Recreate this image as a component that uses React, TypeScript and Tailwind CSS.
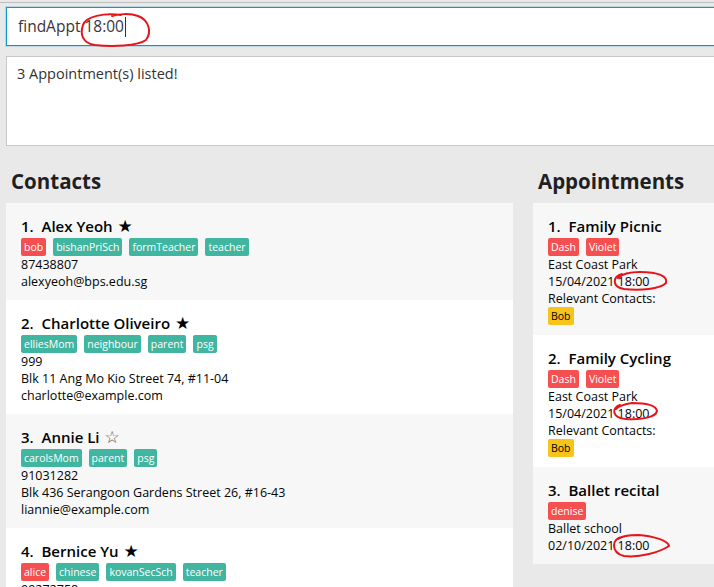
import React from "react";

type Tag = { t: string; c: "red" | "teal" | "yellow" };

const tagCls: Record<string, string> = {
  red: "bg-[#f54f52] text-white",
  teal: "bg-[#40b59f] text-white",
  yellow: "bg-[#f7c41a] text-black",
};

function Tags({ tags }: { tags: Tag[] }) {
  return (
    <div className="flex gap-[7px] h-[18px]">
      {tags.map((g, i) => (
        <span
          key={i}
          className={`h-[18px] px-[3px] rounded-[2px] text-[10.5px] leading-[18px] ${tagCls[g.c]}`}
        >
          {g.t}
        </span>
      ))}
    </div>
  );
}

function NameRow({ n, name, star }: { n: number; name: string; star?: "full" | "empty" }) {
  return (
    <div className="flex items-center h-[23px] text-[15px] font-semibold text-[#010504] whitespace-pre">
      <span>{`${n}.  `}</span>
      <span>{name}</span>
      {star === "full" && (
        <span className="ml-[5px] text-[17px] leading-none font-normal text-black" style={{ fontFamily: "'DejaVu Sans', sans-serif" }}>★</span>
      )}
      {star === "empty" && (
        <span className="ml-[5px] text-[17px] leading-none font-normal text-[#555]" style={{ fontFamily: "'DejaVu Sans', sans-serif" }}>☆</span>
      )}
    </div>
  );
}

type Contact = { name: string; star: "full" | "empty"; tags: Tag[]; lines: string[] };

const contacts: Contact[] = [
  {
    name: "Alex Yeoh",
    star: "full",
    tags: [
      { t: "bob", c: "red" },
      { t: "bishanPriSch", c: "teal" },
      { t: "formTeacher", c: "teal" },
      { t: "teacher", c: "teal" },
    ],
    lines: ["87438807", "alexyeoh@bps.edu.sg"],
  },
  {
    name: "Charlotte Oliveiro",
    star: "full",
    tags: [
      { t: "elliesMom", c: "teal" },
      { t: "neighbour", c: "teal" },
      { t: "parent", c: "teal" },
      { t: "psg", c: "teal" },
    ],
    lines: ["999", "Blk 11 Ang Mo Kio Street 74, #11-04", "charlotte@example.com"],
  },
  {
    name: "Annie Li",
    star: "empty",
    tags: [
      { t: "carolsMom", c: "teal" },
      { t: "parent", c: "teal" },
      { t: "psg", c: "teal" },
    ],
    lines: ["91031282", "Blk 436 Serangoon Gardens Street 26, #16-43", "liannie@example.com"],
  },
  {
    name: "Bernice Yu",
    star: "full",
    tags: [
      { t: "alice", c: "red" },
      { t: "chinese", c: "teal" },
      { t: "kovanSecSch", c: "teal" },
      { t: "teacher", c: "teal" },
    ],
    lines: ["99272758", "Blk 30 Lorong 3 Serangoon Gardens, #07-18", "berniceyu@example.com"],
  },
];

type Appt = { name: string; tags: Tag[]; place: string; date: string; contacts?: Tag[] };

const appts: Appt[] = [
  {
    name: "Family Picnic",
    tags: [
      { t: "Dash", c: "red" },
      { t: "Violet", c: "red" },
    ],
    place: "East Coast Park",
    date: "15/04/2021 18:00",
    contacts: [{ t: "Bob", c: "yellow" }],
  },
  {
    name: "Family Cycling",
    tags: [
      { t: "Dash", c: "red" },
      { t: "Violet", c: "red" },
    ],
    place: "East Coast Park",
    date: "15/04/2021 18:00",
    contacts: [{ t: "Bob", c: "yellow" }],
  },
  {
    name: "Ballet recital",
    tags: [{ t: "denise", c: "red" }],
    place: "Ballet school",
    date: "02/10/2021 18:00",
  },
];

function Line({ children }: { children: React.ReactNode }) {
  return <div className="h-[17px] leading-[17px] text-[12.5px] text-[#010504] whitespace-nowrap">{children}</div>;
}

export default function App() {
  return (
    <div
      className="relative w-[714px] h-[587px] overflow-hidden bg-[#e9e9e9]"
      style={{ fontFamily: "'Open Sans', 'Noto Sans', sans-serif" }}
    >
      <div className="h-[2px]" />
      <div className="h-px bg-[#bdbdbd]" />
      <div className="pl-[6px] pt-[4px]">
        <div className="h-[39px] w-[720px] bg-white border border-[#0a98d3] shadow-[0_0_0_1px_rgba(10,152,211,0.2)] flex items-center pl-[11px] text-[15.5px] text-[#3a3540]">
          <span>findAppt 18:00</span>
          <span className="w-px h-[20px] bg-[#333] ml-px" />
        </div>
        <div className="mt-[10px] h-[90px] w-[720px] bg-white border border-[#c8c8c8] pl-[10px] pt-[6px] text-[14.5px] text-[#333]">
          3 Appointment(s) listed!
        </div>
      </div>

      <div className="flex">
        <div className="w-[513px] pl-[6px] shrink-0">
          <div className="h-[57px] pl-[5px] pt-[21px] text-[20.5px] leading-[28px] font-bold text-[#1f1f24]">Contacts</div>
          <div>
            {contacts.map((c, i) => (
              <div
                key={i}
                className={`pl-[15px] pt-[12px] pb-[10px] ${i % 2 === 0 ? "bg-[#f7f7f7]" : "bg-white"}`}
              >
                <NameRow n={i + 1} name={c.name} star={c.star} />
                <Tags tags={c.tags} />
                {c.lines.map((l, j) => (
                  <Line key={j}>{l}</Line>
                ))}
              </div>
            ))}
          </div>
        </div>
        <div className="ml-[20px] w-[240px] shrink-0">
          <div className="h-[57px] pl-[5px] pt-[21px] text-[20.5px] leading-[28px] font-bold text-[#1f1f24]">Appointments</div>
          <div>
            {appts.map((a, i) => (
              <div
                key={i}
                className={`pl-[15px] pt-[12px] pb-[10px] ${i % 2 === 0 ? "bg-[#f7f7f7]" : "bg-white"}`}
              >
                <NameRow n={i + 1} name={a.name} />
                <Tags tags={a.tags} />
                <Line>{a.place}</Line>
                <Line>{a.date}</Line>
                {a.contacts && (
                  <>
                    <Line>Relevant Contacts:</Line>
                    <Tags tags={a.contacts} />
                  </>
                )}
              </div>
            ))}
          </div>
        </div>
      </div>

      <svg className="absolute left-0 top-0 pointer-events-none" width="714" height="587" viewBox="0 0 714 587">
        <g fill="none" stroke="#e8141c" strokeWidth="2" strokeLinecap="round" strokeLinejoin="round">
          <path d="M121 15 C104 13 86 16 83 25 C80 34 82 43 95 45 C112 47 138 46 146 40 C152 32 149 20 138 16 C130 13 118 14 112 16" />
          <path d="M622 274 C612 277 612 287 624 289 C640 291 660 289 666 283 C668 276 658 272 640 272 C630 272 622 274 618 278" />
          <path d="M620 405 C611 408 612 418 626 419 C642 420 656 417 657 411 C656 405 645 403 632 403 C625 404 619 406 616 409" />
          <path d="M622 537 C612 538 610 552 624 556 C640 558 660 552 669 546 C668 540 652 536 638 535 C630 535 622 536 618 539" />
        </g>
      </svg>
    </div>
  );
}
